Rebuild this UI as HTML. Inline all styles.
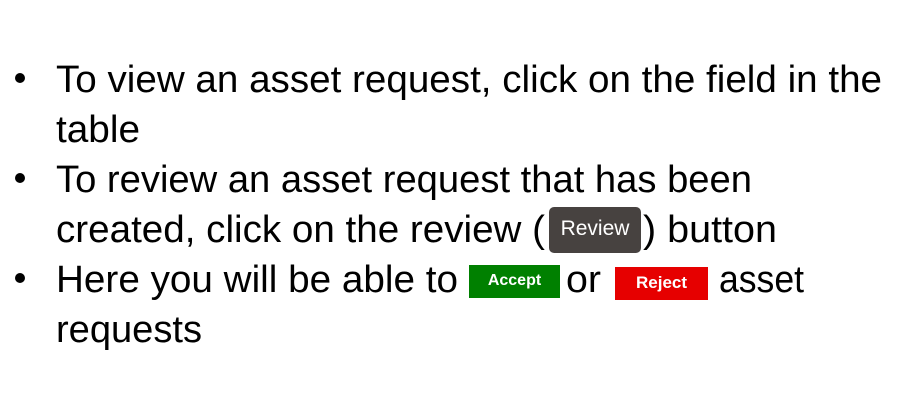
<!DOCTYPE html>
<html><head><meta charset="utf-8"><style>
html,body{margin:0;padding:0;background:#fff;width:900px;height:410px;overflow:hidden;position:relative}
svg{position:absolute;left:0;top:0}
.b{position:absolute;font-family:"Liberation Sans",sans-serif;color:#fff;text-align:center;box-sizing:border-box}
</style></head><body>
<svg width="900" height="410" font-family="Liberation Sans, sans-serif" font-size="38" fill="#000">
<circle cx="20" cy="78" r="5"/>
<circle cx="20" cy="178" r="5"/>
<circle cx="20" cy="278" r="5"/>
<text x="56" y="92" textLength="826" lengthAdjust="spacingAndGlyphs">To view an asset request, click on the field in the</text>
<text x="56" y="142" textLength="84" lengthAdjust="spacingAndGlyphs">table</text>
<text x="56" y="192" textLength="696" lengthAdjust="spacingAndGlyphs">To review an asset request that has been</text>
<text x="56" y="242" textLength="489" lengthAdjust="spacingAndGlyphs">created, click on the review (</text>
<text x="643" y="242" textLength="134" lengthAdjust="spacingAndGlyphs">) button</text>
<text x="56" y="292" textLength="402" lengthAdjust="spacingAndGlyphs">Here you will be able to</text>
<text x="566" y="292" textLength="35" lengthAdjust="spacingAndGlyphs">or</text>
<text x="719" y="292" textLength="85" lengthAdjust="spacingAndGlyphs">asset</text>
<text x="56" y="342" textLength="146" lengthAdjust="spacingAndGlyphs">requests</text>
</svg>
<div class="b" style="left:549px;top:207px;width:92px;height:46px;background:#474240;border-radius:5px;font-size:21px;line-height:44px">Review</div>
<div class="b" style="left:469px;top:265px;width:91px;height:33px;background:#008000;font-size:16px;font-weight:bold;line-height:31px">Accept</div>
<div class="b" style="left:615px;top:267px;width:93px;height:33px;background:#e60000;font-size:17px;font-weight:bold;line-height:31px">Reject</div>
</body></html>
